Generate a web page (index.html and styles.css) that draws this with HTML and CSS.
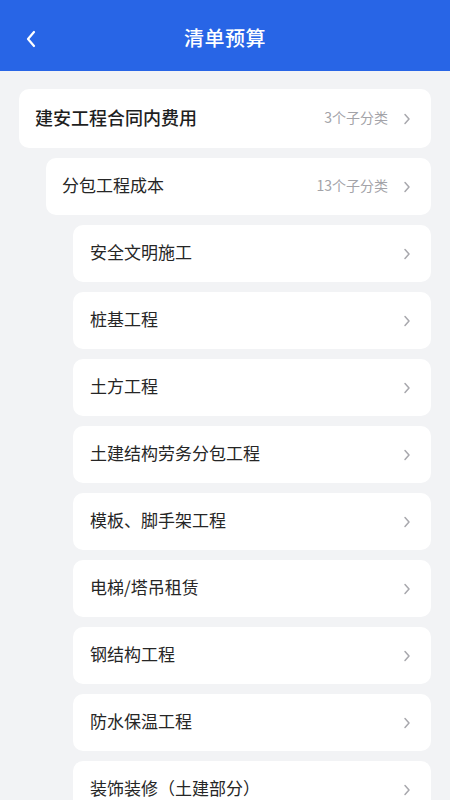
FILE: index.html
```html
<!DOCTYPE html>
<html lang="zh-CN">
<head>
  <meta charset="UTF-8">
  <meta name="viewport" content="width=device-width, initial-scale=1.0">
  <title>清单预算</title>
  <link rel="stylesheet" href="styles.css">
</head>
<body>

<!-- Header -->
<div class="header">
  <a class="back" href="#">
    <svg width="12" height="18" viewBox="0 0 12 18"><path d="M9 2 L3 9 L9 16" fill="none" stroke="#fff" stroke-width="2.2" stroke-linecap="round" stroke-linejoin="round"/></svg>
  </a>
  <h1>清单预算</h1>
</div>

<!-- Category tree -->
<div class="list">
  <div class="item level-1">
    <span class="name">建安工程合同内费用</span>
    <span class="count">3个子分类</span>
    <span class="arrow"><svg width="8" height="12" viewBox="0 0 8 12"><path d="M2 1.5 L6 6 L2 10.5" fill="none" stroke="#a8a8ad" stroke-width="1.5" stroke-linecap="round" stroke-linejoin="round"/></svg></span>
  </div>
  <div class="item level-2">
    <span class="name">分包工程成本</span>
    <span class="count">13个子分类</span>
    <span class="arrow"><svg width="8" height="12" viewBox="0 0 8 12"><path d="M2 1.5 L6 6 L2 10.5" fill="none" stroke="#a8a8ad" stroke-width="1.5" stroke-linecap="round" stroke-linejoin="round"/></svg></span>
  </div>
  <div class="item level-3"><span class="name">安全文明施工</span><span class="arrow"><svg width="8" height="12" viewBox="0 0 8 12"><path d="M2 1.5 L6 6 L2 10.5" fill="none" stroke="#a8a8ad" stroke-width="1.5" stroke-linecap="round" stroke-linejoin="round"/></svg></span></div>
  <div class="item level-3"><span class="name">桩基工程</span><span class="arrow"><svg width="8" height="12" viewBox="0 0 8 12"><path d="M2 1.5 L6 6 L2 10.5" fill="none" stroke="#a8a8ad" stroke-width="1.5" stroke-linecap="round" stroke-linejoin="round"/></svg></span></div>
  <div class="item level-3"><span class="name">土方工程</span><span class="arrow"><svg width="8" height="12" viewBox="0 0 8 12"><path d="M2 1.5 L6 6 L2 10.5" fill="none" stroke="#a8a8ad" stroke-width="1.5" stroke-linecap="round" stroke-linejoin="round"/></svg></span></div>
  <div class="item level-3"><span class="name">土建结构劳务分包工程</span><span class="arrow"><svg width="8" height="12" viewBox="0 0 8 12"><path d="M2 1.5 L6 6 L2 10.5" fill="none" stroke="#a8a8ad" stroke-width="1.5" stroke-linecap="round" stroke-linejoin="round"/></svg></span></div>
  <div class="item level-3"><span class="name">模板、脚手架工程</span><span class="arrow"><svg width="8" height="12" viewBox="0 0 8 12"><path d="M2 1.5 L6 6 L2 10.5" fill="none" stroke="#a8a8ad" stroke-width="1.5" stroke-linecap="round" stroke-linejoin="round"/></svg></span></div>
  <div class="item level-3"><span class="name">电梯/塔吊租赁</span><span class="arrow"><svg width="8" height="12" viewBox="0 0 8 12"><path d="M2 1.5 L6 6 L2 10.5" fill="none" stroke="#a8a8ad" stroke-width="1.5" stroke-linecap="round" stroke-linejoin="round"/></svg></span></div>
  <div class="item level-3"><span class="name">钢结构工程</span><span class="arrow"><svg width="8" height="12" viewBox="0 0 8 12"><path d="M2 1.5 L6 6 L2 10.5" fill="none" stroke="#a8a8ad" stroke-width="1.5" stroke-linecap="round" stroke-linejoin="round"/></svg></span></div>
  <div class="item level-3"><span class="name">防水保温工程</span><span class="arrow"><svg width="8" height="12" viewBox="0 0 8 12"><path d="M2 1.5 L6 6 L2 10.5" fill="none" stroke="#a8a8ad" stroke-width="1.5" stroke-linecap="round" stroke-linejoin="round"/></svg></span></div>
  <div class="item level-3"><span class="name">装饰装修（土建部分）</span><span class="arrow"><svg width="8" height="12" viewBox="0 0 8 12"><path d="M2 1.5 L6 6 L2 10.5" fill="none" stroke="#a8a8ad" stroke-width="1.5" stroke-linecap="round" stroke-linejoin="round"/></svg></span></div>
</div>

</body>
</html>
```

FILE: styles.css
```css
body {
  margin: 0;
  font-family: "Noto Sans CJK SC", "Noto Sans", sans-serif;
  background-color: #f2f3f5;
  color: #222;
}

.header {
  height: 71px;
  display: flex;
  align-items: center;
  justify-content: center;
  position: relative;
  background-color: #2865e6;
  color: #fff;
}

.header h1 {
  margin: 0;
  font-size: 20px;
  font-weight: 500;
  letter-spacing: 0.5px;
  padding-top: 4px;
}

.header .back {
  position: absolute;
  left: 25px;
  top: 30px;
  display: flex;
}

.list {
  padding: 18px 19px 0 19px;
  display: flex;
  flex-direction: column;
  gap: 10px;
}

.item {
  display: flex;
  align-items: center;
  height: 57px;
  padding: 0 20px 0 16px;
  background-color: #fff;
  border-radius: 10px;
}

.item .name {
  flex: 1;
  font-size: 17px;
  line-height: 1.2;
  color: #262626;
  margin-top: -2px;
}

.item .count {
  font-size: 14px;
  line-height: 1.2;
  color: #a3a3a8;
  margin-right: 15px;
  margin-top: -2px;
}

.item .arrow {
  display: flex;
}

.level-1 {
  height: 59px;
}

.level-1 .name {
  font-size: 18px;
  font-weight: 500;
  color: #1f1f1f;
}

.level-2 {
  margin-left: 27px;
}

.level-3 {
  margin-left: 54px;
  padding-left: 17px;
}
```
